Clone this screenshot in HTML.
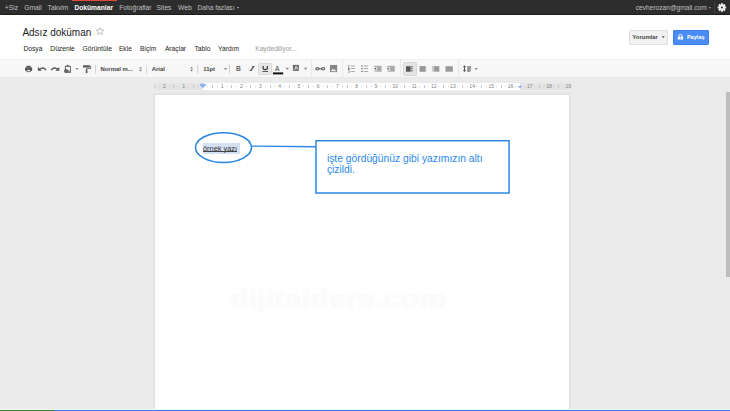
<!DOCTYPE html>
<html><head><meta charset="utf-8">
<style>
*{margin:0;padding:0;box-sizing:border-box}
html,body{width:730px;height:411px;overflow:hidden;background:#ebebeb;font-family:"Liberation Sans",sans-serif;position:relative}
.a{position:absolute;white-space:nowrap}
</style></head><body>
<div class="a" style="left:0px;top:0px;width:730px;height:15px;background:#2d2d2d;border-bottom:1px solid #1e1e1e"></div>
<div class="a" style="left:71.6px;top:0px;width:45.6px;height:1.1px;background:#e24a35;"></div>
<span class="a" style="left:4.8px;top:4.00px;font-size:6.7px;line-height:8.04px;color:#c0c0c0;font-weight:normal;">+Siz</span>
<span class="a" style="left:24.3px;top:4.00px;font-size:6.7px;line-height:8.04px;color:#c0c0c0;font-weight:normal;">Gmail</span>
<span class="a" style="left:47.6px;top:4.00px;font-size:6.7px;line-height:8.04px;color:#c0c0c0;font-weight:normal;">Takvim</span>
<span class="a" style="left:119.2px;top:4.00px;font-size:6.7px;line-height:8.04px;color:#c0c0c0;font-weight:normal;">Fotoğraflar</span>
<span class="a" style="left:156.6px;top:4.00px;font-size:6.7px;line-height:8.04px;color:#c0c0c0;font-weight:normal;">Sites</span>
<span class="a" style="left:178px;top:4.00px;font-size:6.7px;line-height:8.04px;color:#c0c0c0;font-weight:normal;">Web</span>
<span class="a" style="left:197.4px;top:4.00px;font-size:6.7px;line-height:8.04px;color:#c0c0c0;font-weight:normal;">Daha fazlası</span>
<span class="a" style="left:74.4px;top:4.00px;font-size:6.7px;line-height:8.04px;color:#ffffff;font-weight:bold;">Dokümanlar</span>
<span class="a" style="left:635.8px;top:4.00px;font-size:6.6px;line-height:7.92px;color:#c0c0c0;font-weight:normal;">cevherozan@gmail.com</span>
<div class="a" style="left:0px;top:15px;width:730px;height:44px;background:#fff;"></div>
<span class="a" style="left:22.4px;top:27.00px;font-size:10px;line-height:12.0px;color:#222;font-weight:normal;">Adsız doküman</span>
<span class="a" style="left:23.4px;top:45.00px;font-size:6.7px;line-height:8.04px;color:#222;font-weight:normal;">Dosya</span>
<span class="a" style="left:50.3px;top:45.00px;font-size:6.7px;line-height:8.04px;color:#222;font-weight:normal;">Düzenle</span>
<span class="a" style="left:82.5px;top:45.00px;font-size:6.7px;line-height:8.04px;color:#222;font-weight:normal;">Görüntüle</span>
<span class="a" style="left:118.9px;top:45.00px;font-size:6.7px;line-height:8.04px;color:#222;font-weight:normal;">Ekle</span>
<span class="a" style="left:140px;top:45.00px;font-size:6.7px;line-height:8.04px;color:#222;font-weight:normal;">Biçim</span>
<span class="a" style="left:164.9px;top:45.00px;font-size:6.7px;line-height:8.04px;color:#222;font-weight:normal;">Araçlar</span>
<span class="a" style="left:194.5px;top:45.00px;font-size:6.7px;line-height:8.04px;color:#222;font-weight:normal;">Tablo</span>
<span class="a" style="left:218px;top:45.00px;font-size:6.7px;line-height:8.04px;color:#222;font-weight:normal;">Yardım</span>
<span class="a" style="left:255.2px;top:45.00px;font-size:6.7px;line-height:8.04px;color:#999;font-weight:normal;">Kaydediliyor...</span>
<div class="a" style="left:629.2px;top:30.2px;width:38.6px;height:14.5px;background:#f2f2f2;border:1px solid #dfdfdf;border-radius:1px"></div>
<span class="a" style="left:632.3px;top:34.00px;font-size:5.95px;line-height:7.14px;color:#444;font-weight:bold;">Yorumlar</span>
<div class="a" style="left:672.6px;top:30px;width:36.4px;height:14.7px;background:#4b8cf6;border:1px solid #3d7fec;border-radius:1px"></div>
<span class="a" style="left:686.9px;top:34.00px;font-size:5.6px;line-height:6.72px;color:#fff;font-weight:bold;">Paylaş</span>
<div class="a" style="left:0px;top:59px;width:730px;height:19px;background:#f7f7f7;border-top:1px solid #f0f0f0;border-bottom:1px solid #e8e8e8"></div>
<div class="a" style="left:258.3px;top:62.5px;width:13.4px;height:12.8px;background:#e8e8e8;border:1px solid #d9d9d9;border-radius:1.5px"></div>
<div class="a" style="left:403px;top:61.8px;width:13.5px;height:14.2px;background:#e4e4e4;border:1px solid #d6d6d6;border-radius:1.5px"></div>
<span class="a" style="left:100.5px;top:66.00px;font-size:5.9px;line-height:7.08px;color:#444;font-weight:bold;">Normal m...</span>
<span class="a" style="left:151.8px;top:66.00px;font-size:5.9px;line-height:7.08px;color:#444;font-weight:bold;">Arial</span>
<span class="a" style="left:203.3px;top:66.00px;font-size:5.9px;line-height:7.08px;color:#444;font-weight:bold;">11pt</span>
<span class="a" style="left:236.1px;top:65.00px;font-size:6.7px;line-height:8.04px;color:#666;font-weight:bold;">B</span>
<span class="a" style="left:274.7px;top:65.00px;font-size:6.9px;line-height:8.28px;color:#777;font-weight:bold;">A</span>
<div class="a" style="left:154.1px;top:82.5px;width:416.9px;height:7px;background:#e4e4e4;"></div>
<div class="a" style="left:202.8px;top:82.5px;width:317.4px;height:7px;background:#fff;"></div>
<div class="a" style="left:154.2px;top:84.8px;width:1px;height:3px;background:#c6c6c6;"></div>
<div class="a" style="left:159.01px;top:85.8px;width:1px;height:1px;background:#cfcfcf;"></div>
<span class="a" style="left:162.92000000000002px;top:83.00px;font-size:5px;line-height:6.0px;color:#808080;font-weight:normal;">2</span>
<div class="a" style="left:168.63px;top:85.8px;width:1px;height:1px;background:#cfcfcf;"></div>
<div class="a" style="left:173.44px;top:84.8px;width:1px;height:3px;background:#c6c6c6;"></div>
<div class="a" style="left:178.25px;top:85.8px;width:1px;height:1px;background:#cfcfcf;"></div>
<span class="a" style="left:182.16px;top:83.00px;font-size:5px;line-height:6.0px;color:#808080;font-weight:normal;">1</span>
<div class="a" style="left:187.87px;top:85.8px;width:1px;height:1px;background:#cfcfcf;"></div>
<div class="a" style="left:192.68px;top:84.8px;width:1px;height:3px;background:#c6c6c6;"></div>
<div class="a" style="left:197.49px;top:85.8px;width:1px;height:1px;background:#cfcfcf;"></div>
<div class="a" style="left:207.11px;top:85.8px;width:1px;height:1px;background:#cfcfcf;"></div>
<div class="a" style="left:211.92px;top:84.8px;width:1px;height:3px;background:#c6c6c6;"></div>
<div class="a" style="left:216.73px;top:85.8px;width:1px;height:1px;background:#cfcfcf;"></div>
<span class="a" style="left:220.64000000000001px;top:83.00px;font-size:5px;line-height:6.0px;color:#808080;font-weight:normal;">1</span>
<div class="a" style="left:226.35px;top:85.8px;width:1px;height:1px;background:#cfcfcf;"></div>
<div class="a" style="left:231.16px;top:84.8px;width:1px;height:3px;background:#c6c6c6;"></div>
<div class="a" style="left:235.97px;top:85.8px;width:1px;height:1px;background:#cfcfcf;"></div>
<span class="a" style="left:239.88px;top:83.00px;font-size:5px;line-height:6.0px;color:#808080;font-weight:normal;">2</span>
<div class="a" style="left:245.59px;top:85.8px;width:1px;height:1px;background:#cfcfcf;"></div>
<div class="a" style="left:250.4px;top:84.8px;width:1px;height:3px;background:#c6c6c6;"></div>
<div class="a" style="left:255.21px;top:85.8px;width:1px;height:1px;background:#cfcfcf;"></div>
<span class="a" style="left:259.12px;top:83.00px;font-size:5px;line-height:6.0px;color:#808080;font-weight:normal;">3</span>
<div class="a" style="left:264.83px;top:85.8px;width:1px;height:1px;background:#cfcfcf;"></div>
<div class="a" style="left:269.64px;top:84.8px;width:1px;height:3px;background:#c6c6c6;"></div>
<div class="a" style="left:274.45px;top:85.8px;width:1px;height:1px;background:#cfcfcf;"></div>
<span class="a" style="left:278.36px;top:83.00px;font-size:5px;line-height:6.0px;color:#808080;font-weight:normal;">4</span>
<div class="a" style="left:284.07px;top:85.8px;width:1px;height:1px;background:#cfcfcf;"></div>
<div class="a" style="left:288.88px;top:84.8px;width:1px;height:3px;background:#c6c6c6;"></div>
<div class="a" style="left:293.69px;top:85.8px;width:1px;height:1px;background:#cfcfcf;"></div>
<span class="a" style="left:297.6px;top:83.00px;font-size:5px;line-height:6.0px;color:#808080;font-weight:normal;">5</span>
<div class="a" style="left:303.31px;top:85.8px;width:1px;height:1px;background:#cfcfcf;"></div>
<div class="a" style="left:308.12px;top:84.8px;width:1px;height:3px;background:#c6c6c6;"></div>
<div class="a" style="left:312.93px;top:85.8px;width:1px;height:1px;background:#cfcfcf;"></div>
<span class="a" style="left:316.84000000000003px;top:83.00px;font-size:5px;line-height:6.0px;color:#808080;font-weight:normal;">6</span>
<div class="a" style="left:322.55px;top:85.8px;width:1px;height:1px;background:#cfcfcf;"></div>
<div class="a" style="left:327.36px;top:84.8px;width:1px;height:3px;background:#c6c6c6;"></div>
<div class="a" style="left:332.17px;top:85.8px;width:1px;height:1px;background:#cfcfcf;"></div>
<span class="a" style="left:336.08000000000004px;top:83.00px;font-size:5px;line-height:6.0px;color:#808080;font-weight:normal;">7</span>
<div class="a" style="left:341.79px;top:85.8px;width:1px;height:1px;background:#cfcfcf;"></div>
<div class="a" style="left:346.6px;top:84.8px;width:1px;height:3px;background:#c6c6c6;"></div>
<div class="a" style="left:351.41px;top:85.8px;width:1px;height:1px;background:#cfcfcf;"></div>
<span class="a" style="left:355.32000000000005px;top:83.00px;font-size:5px;line-height:6.0px;color:#808080;font-weight:normal;">8</span>
<div class="a" style="left:361.03px;top:85.8px;width:1px;height:1px;background:#cfcfcf;"></div>
<div class="a" style="left:365.84px;top:84.8px;width:1px;height:3px;background:#c6c6c6;"></div>
<div class="a" style="left:370.65px;top:85.8px;width:1px;height:1px;background:#cfcfcf;"></div>
<span class="a" style="left:374.56000000000006px;top:83.00px;font-size:5px;line-height:6.0px;color:#808080;font-weight:normal;">9</span>
<div class="a" style="left:380.27px;top:85.8px;width:1px;height:1px;background:#cfcfcf;"></div>
<div class="a" style="left:385.08px;top:84.8px;width:1px;height:3px;background:#c6c6c6;"></div>
<div class="a" style="left:389.89px;top:85.8px;width:1px;height:1px;background:#cfcfcf;"></div>
<span class="a" style="left:392.4px;top:83.00px;font-size:5px;line-height:6.0px;color:#808080;font-weight:normal;">10</span>
<div class="a" style="left:399.51px;top:85.8px;width:1px;height:1px;background:#cfcfcf;"></div>
<div class="a" style="left:404.32px;top:84.8px;width:1px;height:3px;background:#c6c6c6;"></div>
<div class="a" style="left:409.13px;top:85.8px;width:1px;height:1px;background:#cfcfcf;"></div>
<span class="a" style="left:411.64px;top:83.00px;font-size:5px;line-height:6.0px;color:#808080;font-weight:normal;">11</span>
<div class="a" style="left:418.75px;top:85.8px;width:1px;height:1px;background:#cfcfcf;"></div>
<div class="a" style="left:423.56px;top:84.8px;width:1px;height:3px;background:#c6c6c6;"></div>
<div class="a" style="left:428.37px;top:85.8px;width:1px;height:1px;background:#cfcfcf;"></div>
<span class="a" style="left:430.88px;top:83.00px;font-size:5px;line-height:6.0px;color:#808080;font-weight:normal;">12</span>
<div class="a" style="left:437.99px;top:85.8px;width:1px;height:1px;background:#cfcfcf;"></div>
<div class="a" style="left:442.8px;top:84.8px;width:1px;height:3px;background:#c6c6c6;"></div>
<div class="a" style="left:447.61px;top:85.8px;width:1px;height:1px;background:#cfcfcf;"></div>
<span class="a" style="left:450.11999999999995px;top:83.00px;font-size:5px;line-height:6.0px;color:#808080;font-weight:normal;">13</span>
<div class="a" style="left:457.23px;top:85.8px;width:1px;height:1px;background:#cfcfcf;"></div>
<div class="a" style="left:462.04px;top:84.8px;width:1px;height:3px;background:#c6c6c6;"></div>
<div class="a" style="left:466.85px;top:85.8px;width:1px;height:1px;background:#cfcfcf;"></div>
<span class="a" style="left:469.35999999999996px;top:83.00px;font-size:5px;line-height:6.0px;color:#808080;font-weight:normal;">14</span>
<div class="a" style="left:476.47px;top:85.8px;width:1px;height:1px;background:#cfcfcf;"></div>
<div class="a" style="left:481.28px;top:84.8px;width:1px;height:3px;background:#c6c6c6;"></div>
<div class="a" style="left:486.09px;top:85.8px;width:1px;height:1px;background:#cfcfcf;"></div>
<span class="a" style="left:488.59999999999997px;top:83.00px;font-size:5px;line-height:6.0px;color:#808080;font-weight:normal;">15</span>
<div class="a" style="left:495.71px;top:85.8px;width:1px;height:1px;background:#cfcfcf;"></div>
<div class="a" style="left:500.52px;top:84.8px;width:1px;height:3px;background:#c6c6c6;"></div>
<div class="a" style="left:505.33px;top:85.8px;width:1px;height:1px;background:#cfcfcf;"></div>
<span class="a" style="left:507.84px;top:83.00px;font-size:5px;line-height:6.0px;color:#808080;font-weight:normal;">16</span>
<div class="a" style="left:514.95px;top:85.8px;width:1px;height:1px;background:#cfcfcf;"></div>
<div class="a" style="left:519.76px;top:84.8px;width:1px;height:3px;background:#c6c6c6;"></div>
<div class="a" style="left:524.57px;top:85.8px;width:1px;height:1px;background:#cfcfcf;"></div>
<span class="a" style="left:527.08px;top:83.00px;font-size:5px;line-height:6.0px;color:#808080;font-weight:normal;">17</span>
<div class="a" style="left:534.19px;top:85.8px;width:1px;height:1px;background:#cfcfcf;"></div>
<div class="a" style="left:539.0px;top:84.8px;width:1px;height:3px;background:#c6c6c6;"></div>
<div class="a" style="left:543.81px;top:85.8px;width:1px;height:1px;background:#cfcfcf;"></div>
<span class="a" style="left:546.32px;top:83.00px;font-size:5px;line-height:6.0px;color:#808080;font-weight:normal;">18</span>
<div class="a" style="left:553.43px;top:85.8px;width:1px;height:1px;background:#cfcfcf;"></div>
<div class="a" style="left:558.24px;top:84.8px;width:1px;height:3px;background:#c6c6c6;"></div>
<div class="a" style="left:563.05px;top:85.8px;width:1px;height:1px;background:#cfcfcf;"></div>
<span class="a" style="left:565.56px;top:83.00px;font-size:5px;line-height:6.0px;color:#808080;font-weight:normal;">19</span>
<div class="a" style="left:153.9px;top:94.2px;width:416px;height:330px;background:#fff;border:1px solid #e0e0e0;border-bottom:none;box-shadow:0 0 2px rgba(0,0,0,0.09)"></div>
<span class="a" style="left:229.5px;top:284.00px;font-size:24.5px;line-height:29.4px;color:#fbfbfb;font-weight:bold;transform:scaleX(1.25);transform-origin:0 0;-webkit-text-stroke:1.2px #fbfbfb">dijitalders.com</span>
<div class="a" style="left:203.1px;top:143.1px;width:36.7px;height:10.6px;background:#d6e0f3;"></div>
<span class="a" style="left:203px;top:145.00px;font-size:7.4px;line-height:8.88px;color:#333;font-weight:normal;">örnek yazı</span>
<div class="a" style="left:203.2px;top:151.1px;width:33.8px;height:0.8px;background:#444;"></div>
<span class="a" style="left:326.9px;top:153.00px;font-size:10.3px;line-height:12.36px;color:#2a88ea;font-weight:normal;">işte gördüğünüz gibi yazımızın altı</span>
<span class="a" style="left:326.9px;top:164.00px;font-size:10.3px;line-height:12.36px;color:#2a88ea;font-weight:normal;">çizildi.</span>
<div class="a" style="left:726.2px;top:91.8px;width:3.8px;height:185.7px;background:#bdbdbd;"></div>
<div class="a" style="left:0px;top:409px;width:730px;height:1px;background:#f6f6f6;"></div>
<div class="a" style="left:0px;top:410px;width:730px;height:1px;background:#2f7ee6;"></div>
<div class="a" style="left:0px;top:410px;width:54.4px;height:1px;background:#2a862a;"></div>
<svg class="a" style="left:0;top:0" width="730" height="411" viewBox="0 0 730 411">
<g fill="#575757">
<!-- print -->
<rect x="26.4" y="65.8" width="4.4" height="1.6"/>
<rect x="25" y="67.2" width="7.1" height="3.9" rx="1"/>
<rect x="26.6" y="69.3" width="4" height="2.8" fill="#575757"/>
<rect x="27.3" y="69.9" width="2.6" height="1.4" fill="#f5f5f5"/>
<!-- undo -->
<path d="M37.9 66.9 L37.9 70.8 L41.8 70.8 Z"/>
<path d="M39.6 69.3 Q43.2 66.2 46 70.2" fill="none" stroke="#575757" stroke-width="1.4"/>
<!-- redo -->
<path d="M59.3 66.9 L59.3 70.8 L55.4 70.8 Z"/>
<path d="M57.6 69.3 Q54 66.2 51.2 70.2" fill="none" stroke="#575757" stroke-width="1.4"/>
<!-- paste -->
<rect x="67" y="64.8" width="1.4" height="1.3" fill="#666"/>
<rect x="66.1" y="65.6" width="3.2" height="1" fill="#666"/>
<rect x="65.4" y="66.4" width="5" height="6" fill="#fafafa" stroke="#666" stroke-width="1"/>
<path d="M65.6 69 L70.3 71 L70.3 72.4 L65.6 72.4 Z" fill="#888"/>
<ellipse cx="66.1" cy="71" rx="2.1" ry="2" fill="#666"/>
<!-- roller -->
<rect x="83" y="65.2" width="6.9" height="2.3" rx="0.5"/>
<path d="M89.9 66.2 L90.6 66.2 L90.6 68.5 L86.6 68.5 L86.6 69.5" fill="none" stroke="#575757" stroke-width="0.8"/>
<rect x="85.8" y="69.3" width="1.6" height="3.8"/>
</g>
<g fill="#888">
<path d="M75.4 67.9 L78.6 67.9 L77 70 Z"/>
<path d="M139.1 68.6 L141.9 68.6 L140.5 66.8 Z" fill="#888"/>
<path d="M139.1 69.8 L141.9 69.8 L140.5 71.4 Z" fill="#666"/>
<path d="M190.2 68.5 L193 68.5 L191.6 66.6 Z" fill="#888"/>
<path d="M190.2 69.7 L193 69.7 L191.6 71.4 Z" fill="#666"/>
<path d="M223.9 67.9 L227.1 67.9 L225.5 70 Z"/>
<path d="M285.7 67.8 L288.9 67.8 L287.3 69.9 Z"/>
<path d="M304 67.8 L307.2 67.8 L305.6 69.9 Z"/>
<path d="M474.6 67.9 L477.8 67.9 L476.2 70 Z"/>
<path d="M661.8 36.3 L664.8 36.3 L663.3 38.1 Z" fill="#555"/>
</g>
<g fill="#d0d0d0">
<rect x="95" y="64.8" width="0.9" height="8.6"/>
<rect x="146.2" y="64.8" width="0.9" height="8.6"/>
<rect x="197.3" y="64.8" width="0.9" height="8.6"/>
<rect x="229" y="64.6" width="0.9" height="8.9"/>
</g>
<g fill="#e6e6e6">
<rect x="311" y="59" width="0.9" height="18.7"/>
<rect x="342" y="59" width="0.9" height="18.7"/>
<rect x="400.1" y="59" width="0.9" height="18.7"/>
<rect x="458" y="59" width="0.9" height="18.7"/>
</g>
<!-- underline bar & A color -->
<rect x="262.5" y="71" width="5.5" height="0.8" fill="#333"/>
<rect x="272.9" y="72.4" width="10.3" height="2" fill="#111"/>
<!-- highlight color icon -->
<rect x="292.9" y="64.9" width="6" height="6" fill="#6a6a6a"/>
<path d="M294.4 70 L296.2 66 L297.9 69.6" fill="none" stroke="#e0e0e0" stroke-width="0.9"/>
<rect x="295.2" y="68.4" width="2" height="0.6" fill="#e0e0e0"/>
<!-- link -->
<g fill="none" stroke="#666" stroke-width="1.2">
<ellipse cx="317.4" cy="68.85" rx="1.6" ry="1.15"/>
<ellipse cx="323.1" cy="68.85" rx="1.6" ry="1.15"/>
</g>
<rect x="318.6" y="68.3" width="3.3" height="1.1" fill="#666"/>
<!-- image -->
<rect x="330" y="65" width="7.1" height="7.1" fill="#858585"/>
<path d="M331 71.2 L332.6 68.6 L333.8 70 L334.8 69.2 L336.2 71.2 Z" fill="#f0f0f0"/>
<!-- numbered list -->
<g fill="#9a9a9a">
<rect x="350.7" y="65.6" width="4.3" height="0.8"/>
<rect x="350.7" y="68.2" width="4.3" height="0.8"/>
<rect x="350.7" y="71" width="4.3" height="0.8"/>
<rect x="363.8" y="65.6" width="4.3" height="0.8"/>
<rect x="363.8" y="68.2" width="4.3" height="0.8"/>
<rect x="363.8" y="71" width="4.3" height="0.8"/>
</g>
<g fill="#777">
<rect x="348.3" y="65" width="0.9" height="1.8"/>
<path d="M348 67.4 L349.6 67.4 L349.6 68.4 L348.6 69.3 L349.7 69.3 L349.7 69.9 L348 69.9 Z"/>
<path d="M348 70.5 L349.6 70.5 L349.6 72.4 L348 72.4 L348 71.9 L349.1 71.9 L349.1 71.4 L348.4 71.4 L349.1 71 L348 71 Z"/>
<rect x="361.2" y="65.4" width="1.5" height="1.2"/>
<rect x="361.2" y="68" width="1.5" height="1.2"/>
<rect x="361.2" y="70.8" width="1.5" height="1.2"/>
</g>
<!-- indent -->
<rect x="374.1" y="65.85" width="7.5" height="5.85" fill="#ababab"/>
<rect x="374.1" y="67.1" width="2.9" height="3.6" fill="#f8f8f8"/>
<path d="M376.2 67.4 L374.3 68.75 L376.2 70.1 Z" fill="#4a4a4a"/>
<rect x="387.3" y="65.85" width="7.5" height="5.85" fill="#ababab"/>
<rect x="387.3" y="67.1" width="2.5" height="3.6" fill="#f8f8f8"/>
<path d="M387.6 67.5 L389.4 68.75 L387.6 70 Z" fill="#4a4a4a"/>
<!-- italic I -->
<path d="M252.2 66.5 L254.7 66.5 M249.6 70.5 L252.1 70.5 M253.6 66.4 L250.9 70.6" fill="none" stroke="#666" stroke-width="1"/>
<path d="M253.6 66.4 L250.9 70.6" fill="none" stroke="#666" stroke-width="1.5"/>
<path d="M263.1 66 V68.3 Q263.1 69.6 265.25 69.6 Q267.4 69.6 267.4 68.3 V66" fill="none" stroke="#333" stroke-width="1.2"/>
<!-- align left (active) -->
<rect x="406" y="66.2" width="4.6" height="5.5" fill="#555"/>
<g fill="#555"><rect x="410.6" y="66.4" width="2.2" height="0.9"/><rect x="410.6" y="68.4" width="2.2" height="0.9"/><rect x="410.6" y="70.4" width="2.2" height="0.9"/></g>
<!-- center -->
<g fill="#999">
<rect x="420" y="66.2" width="5.4" height="5.5"/>
<rect x="419" y="66.4" width="7.4" height="0.9"/><rect x="419" y="68.4" width="7.4" height="0.9"/><rect x="419" y="70.4" width="7.4" height="0.9"/>
<!-- right -->
<rect x="434.1" y="66.2" width="5.2" height="5.5"/>
<rect x="431.9" y="66.4" width="2.2" height="0.9"/><rect x="431.9" y="68.4" width="2.2" height="0.9"/><rect x="431.9" y="70.4" width="2.2" height="0.9"/>
<!-- justify -->
<rect x="445.5" y="66.2" width="7.4" height="5.5"/>
<!-- line spacing -->
<path d="M467.1 65.9 H471 V70.6 L469.7 71.9 H467.1 Z"/>
</g>
<g fill="#5a5a5a">
<rect x="464" y="66.3" width="1" height="5"/>
<path d="M462.8 67.3 L466.2 67.3 L464.5 65.3 Z"/>
<path d="M462.8 70.1 L466.2 70.1 L464.5 72 Z"/>
</g>
<!-- lock -->
<rect x="677.8" y="36.6" width="5.3" height="2.9" fill="#fff"/>
<rect x="680.05" y="37.5" width="0.8" height="1.1" fill="#4b8cf6"/>
<path d="M678.8 36.8 V35.7 Q678.8 34.5 680.45 34.5 Q682.1 34.5 682.1 35.7 V36.8" fill="none" stroke="#fff" stroke-width="0.85"/>
<!-- star -->
<path d="M100 27.4 L101.1 30 L103.8 30.1 L101.7 31.9 L102.4 34.5 L100 33 L97.6 34.5 L98.3 31.9 L96.2 30.1 L98.9 30 Z" fill="none" stroke="#b4b4b4" stroke-width="0.8"/>
<!-- gear -->
<g transform="translate(721.9,7.5)" fill="#f0f0f0">
<circle r="3"/>
<rect x="-0.95" y="-4.3" width="1.9" height="8.6"/><rect x="-4.3" y="-0.95" width="8.6" height="1.9"/>
<rect x="-0.95" y="-4.3" width="1.9" height="8.6" transform="rotate(45)"/><rect x="-4.3" y="-0.95" width="8.6" height="1.9" transform="rotate(45)"/>
<circle r="1" fill="#2d2d2d"/>
</g>
<rect x="714" y="1.6" width="0.8" height="11.6" fill="#444"/>
<path d="M708.6 7.3 L711.1 7.3 L709.85 8.8 Z" fill="#aaa"/>
<path d="M236.7 7 L239.2 7 L237.95 8.7 Z" fill="#aaa"/>
<!-- ruler indent markers -->
<path d="M200 83.8 L205.8 83.8 L205.8 85.2 L202.9 88.2 L200 85.2 Z" fill="#8db2ee"/>
<path d="M517.7 86 L522.3 86 L520 88.4 Z" fill="#8db2ee"/>
<!-- drawing -->
<ellipse cx="223.5" cy="147.6" rx="28" ry="14.9" fill="none" stroke="#2c87e4" stroke-width="1.6"/>
<line x1="251.5" y1="146.1" x2="316" y2="146.8" stroke="#2c87e4" stroke-width="1.4"/>
<rect x="316" y="140.7" width="193.1" height="52.3" fill="none" stroke="#2c87e4" stroke-width="1.5"/>
</svg>
</body></html>
